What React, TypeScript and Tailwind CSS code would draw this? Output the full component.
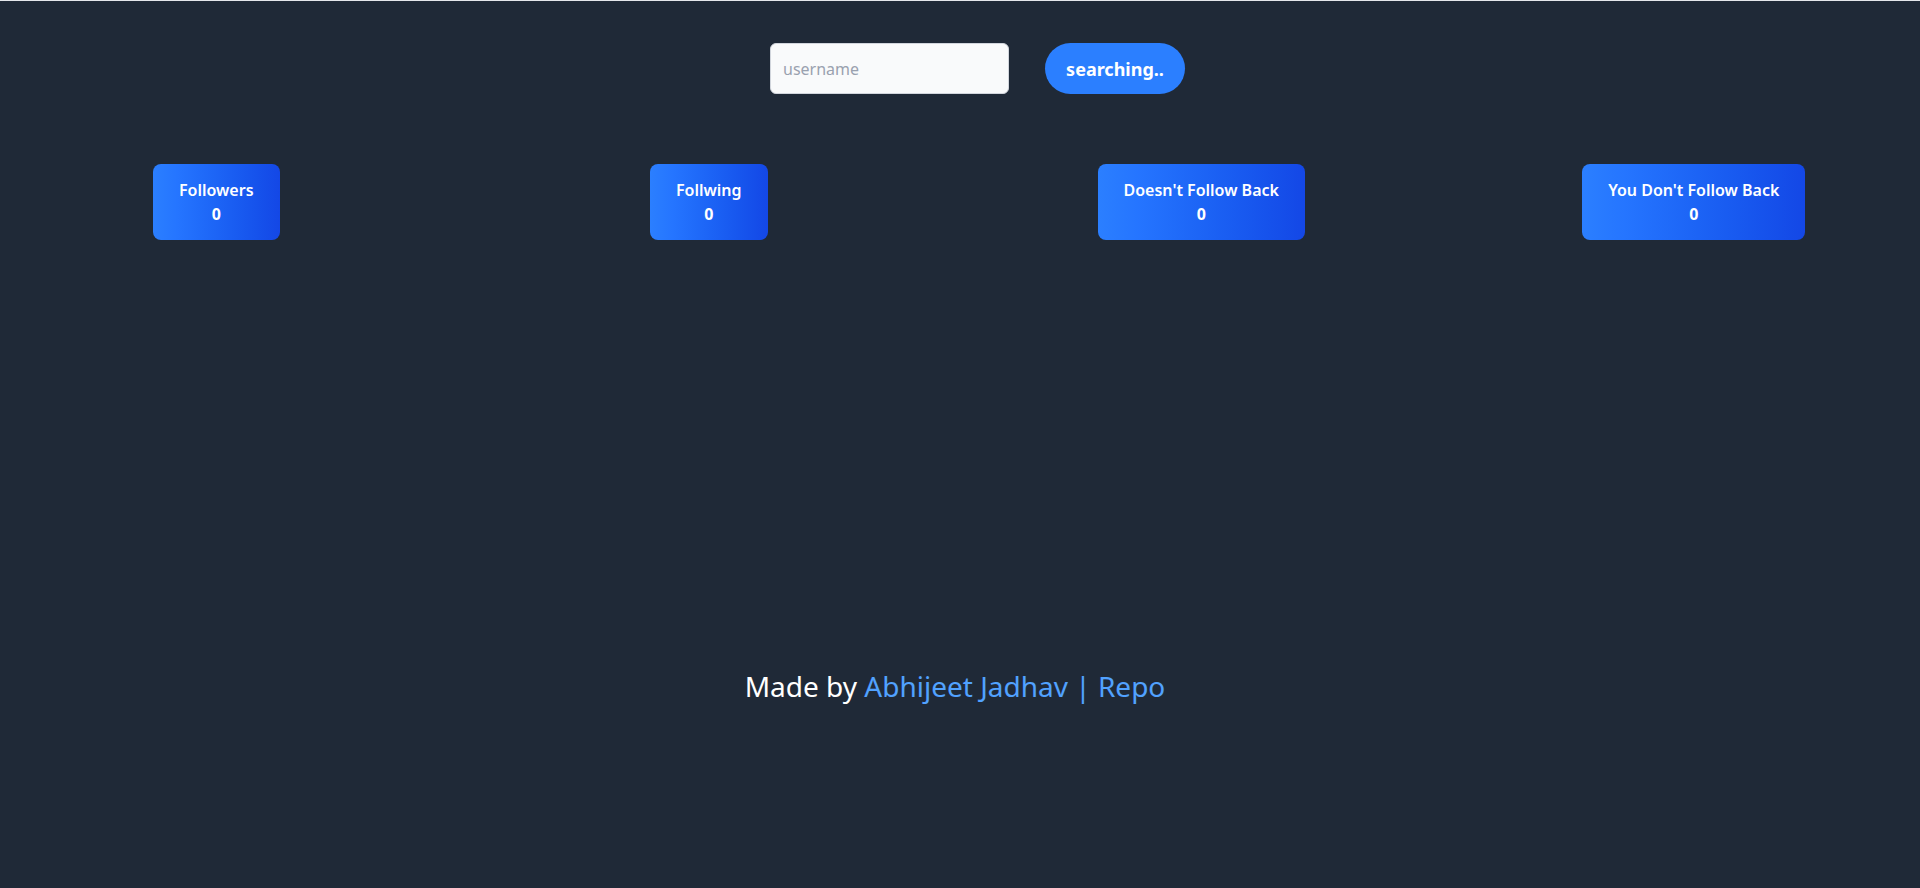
import React from "react";

type StatCardProps = {
  label: string;
  count: number;
};

const StatCard = ({ label, count }: StatCardProps) => {
  return (
    <div className="rounded-lg bg-linear-to-r from-blue-500 to-blue-700 px-[26px] py-3.5 text-center text-base leading-6 font-semibold text-white">
      <div>{label}</div>
      <div className="font-bold">{count}</div>
    </div>
  );
};

export default function App() {
  const stats = [
    { label: "Followers", count: 0 },
    { label: "Follwing", count: 0 },
    { label: "Doesn't Follow Back", count: 0 },
    { label: "You Don't Follow Back", count: 0 },
  ];

  return (
    <div
      className="min-h-screen border-t border-gray-200 bg-[#1f2937] pr-[10px]"
      style={{ fontFamily: '"Segoe UI", "Noto Sans", sans-serif' }}
    >
      <div className="flex items-center justify-center gap-9 pt-[42px] pl-[45px]">
        <input
          type="text"
          placeholder="username"
          className="h-[51px] w-[239px] rounded-md border border-gray-300 bg-gray-50 px-3 text-base text-gray-800 outline-none placeholder:text-gray-400"
        />
        <button className="h-[51px] w-[140px] rounded-full bg-blue-500 text-lg font-bold text-white">
          searching..
        </button>
      </div>

      <div className="mt-[70px] grid grid-cols-4 justify-items-center gap-x-[242px] px-[91px]">
        {stats.map((s) => (
          <StatCard key={s.label} label={s.label} count={s.count} />
        ))}
      </div>

      <div className="mt-[425px] text-center text-[28px] text-white">
        Made by{" "}
        <a href="#" className="text-blue-400">
          Abhijeet Jadhav | Repo
        </a>
      </div>
    </div>
  );
}
